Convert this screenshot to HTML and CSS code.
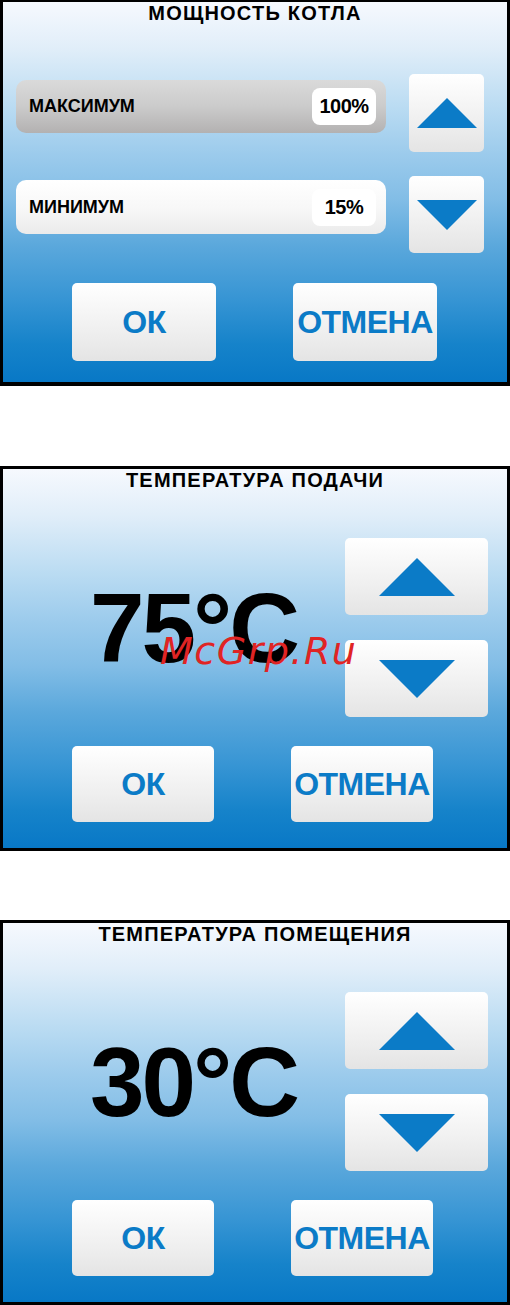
FILE: index.html
```html
<!DOCTYPE html>
<html lang="ru">
<head>
    <meta charset="UTF-8">
    <meta name="viewport" content="width=device-width, initial-scale=1.0">
    <title>Панель котла</title>
    <link rel="stylesheet" href="styles.css">
</head>
<body>
    <!-- Экран: мощность котла -->
    <div class="screen screen-power">
        <h1 class="screen-title">МОЩНОСТЬ КОТЛА</h1>
        <div class="power-rows">
            <div class="power-row">
                <div class="level level-active">
                    <span class="level-name">МАКСИМУМ</span>
                    <span class="level-value">100%</span>
                </div>
                <button class="arrow-btn">
                    <svg viewBox="0 0 60 30"><polygon points="0,30 30,0 60,30"/></svg>
                </button>
            </div>
            <div class="power-row power-row-min">
                <div class="level">
                    <span class="level-name">МИНИМУМ</span>
                    <span class="level-value">15%</span>
                </div>
                <button class="arrow-btn">
                    <svg viewBox="0 0 60 30"><polygon points="0,0 60,0 30,30"/></svg>
                </button>
            </div>
        </div>
        <div class="actions">
            <button class="action-btn">ОК</button>
            <button class="action-btn">ОТМЕНА</button>
        </div>
    </div>

    <!-- Экран: температура подачи -->
    <div class="screen screen-temp screen-supply">
        <h1 class="screen-title">ТЕМПЕРАТУРА ПОДАЧИ</h1>
        <div class="temp-body">
            <div class="temp-value">75°C</div>
            <div class="arrow-stack">
                <button class="arrow-btn">
                    <svg viewBox="0 0 76 38"><polygon points="0,38 38,0 76,38"/></svg>
                </button>
                <button class="arrow-btn">
                    <svg viewBox="0 0 76 38"><polygon points="0,0 76,0 38,38"/></svg>
                </button>
            </div>
        </div>
        <div class="actions">
            <button class="action-btn">ОК</button>
            <button class="action-btn">ОТМЕНА</button>
        </div>
        <span class="watermark">McGrp.Ru</span>
    </div>

    <!-- Экран: температура помещения -->
    <div class="screen screen-temp">
        <h1 class="screen-title">ТЕМПЕРАТУРА ПОМЕЩЕНИЯ</h1>
        <div class="temp-body">
            <div class="temp-value">30°C</div>
            <div class="arrow-stack">
                <button class="arrow-btn">
                    <svg viewBox="0 0 76 38"><polygon points="0,38 38,0 76,38"/></svg>
                </button>
                <button class="arrow-btn">
                    <svg viewBox="0 0 76 38"><polygon points="0,0 76,0 38,38"/></svg>
                </button>
            </div>
        </div>
        <div class="actions">
            <button class="action-btn">ОК</button>
            <button class="action-btn">ОТМЕНА</button>
        </div>
    </div>
</body>
</html>
```

FILE: styles.css
```css
body {
    margin: 0;
    background-color: #fff;
    font-family: 'Liberation Sans', Arial, sans-serif;
    font-weight: bold;
    color: #000;
}

.screen {
    position: relative;
    box-sizing: border-box;
    width: 510px;
    height: 385px;
    border: 3px solid #000;
    background: linear-gradient(to bottom, #f6f9fe 0%, #e1eef9 12%, #b9dbf2 28%, #9ccbec 40%, #82bde6 52%, #5ba8dc 64%, #3795d4 78%, #1683ca 90%, #0878c6 100%);
    margin-bottom: 69px;
}

.screen:last-child {
    margin-bottom: 0;
}

.screen-title {
    margin: 0;
    font-size: 20px;
    line-height: 22px;
    letter-spacing: 1.2px;
    text-align: center;
}

button {
    font-family: inherit;
    font-weight: bold;
    border: none;
    padding: 0;
    cursor: pointer;
    background: linear-gradient(to bottom, #ffffff 0%, #f6f6f6 35%, #eeeeee 65%, #e4e4e4 100%);
    border-radius: 5px;
}

.arrow-btn {
    display: flex;
    align-items: center;
    justify-content: center;
}

.arrow-btn svg {
    fill: #0b7bc7;
    display: block;
}

/* мощность котла */
.screen-power {
    height: 386px;
    border-width: 2px 3px 4px 3px;
    margin-bottom: 80px;
}

.power-rows {
    margin-top: 50px;
    display: flex;
    flex-direction: column;
    gap: 24px;
}

.power-row {
    display: flex;
    align-items: flex-start;
    gap: 23px;
    padding-left: 13px;
}

.power-row .level {
    margin-top: 6px;
}

.power-row-min .level {
    margin-top: 4px;
    height: 54px;
}

.power-row .arrow-btn {
    width: 75px;
    height: 78px;
}

.power-row-min .arrow-btn {
    height: 77px;
}

.power-row .arrow-btn svg {
    width: 60px;
    height: 30px;
}

.level {
    box-sizing: border-box;
    width: 370px;
    height: 53px;
    border-radius: 10px;
    display: flex;
    align-items: center;
    justify-content: space-between;
    padding: 0 10px 0 13px;
    background: linear-gradient(to bottom, #ffffff 0%, #f8f8f8 50%, #ebebeb 100%);
}

.level-active {
    background: linear-gradient(to bottom, #dadada 0%, #cbcbcb 50%, #b3b1b1 100%);
}

.level-name {
    font-size: 18px;
}

.level-value {
    box-sizing: border-box;
    width: 64px;
    height: 37px;
    border-radius: 8px;
    background-color: #fff;
    font-size: 20px;
    line-height: 37px;
    letter-spacing: -0.5px;
    text-align: center;
}

.actions {
    display: flex;
    gap: 77px;
    margin-top: 30px;
    padding-left: 69px;
}

.action-btn {
    width: 144px;
    height: 78px;
    font-size: 32px;
    letter-spacing: -0.5px;
    color: #0b7bc7;
}

/* температура */
.temp-body {
    margin-top: 47px;
    display: flex;
    align-items: center;
    justify-content: space-between;
    padding: 0 19px 0 87px;
}

.temp-value {
    font-size: 98px;
    line-height: 98px;
    letter-spacing: -3px;
}

.arrow-stack {
    display: flex;
    flex-direction: column;
    gap: 25px;
}

.arrow-stack .arrow-btn {
    width: 143px;
    height: 77px;
}

.arrow-stack .arrow-btn svg {
    width: 76px;
    height: 38px;
}

.screen-temp .actions {
    margin-top: 29px;
}

.screen-temp .action-btn {
    width: 142px;
    height: 76px;
}

.watermark {
    position: absolute;
    left: 157px;
    top: 163px;
    font-family: 'DejaVu Sans', sans-serif;
    font-style: oblique;
    font-weight: normal;
    font-size: 38px;
    line-height: 38px;
    letter-spacing: 1.5px;
    color: #e02424;
}
```
